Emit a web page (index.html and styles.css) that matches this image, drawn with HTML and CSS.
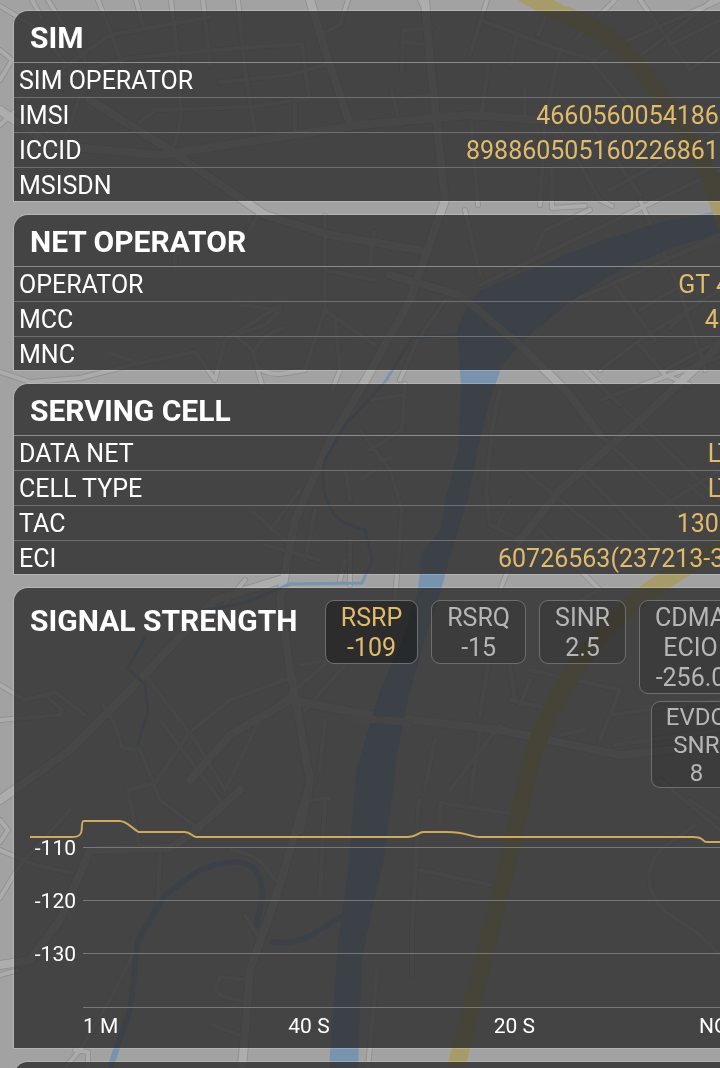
FILE: index.html
```
<!DOCTYPE html>
<html lang="en">

<head>
    <meta charset="UTF-8">
    <title>Cell Info</title>
    <link rel="stylesheet" href="styles.css">
</head>

<body>
    <svg class="map" viewBox="0 0 720 1068" preserveAspectRatio="xMinYMin slice" aria-hidden="true">
        <defs>
            <g id="streets">
                <path d="M0 6L40 30L70 70M32 0L42 18M48 0L85 60M98 0L112 35L122 65M136 0L143 26M171 0L178 60L181 115L178 135L172 150M203 0L210 65M238 0L245 70L255 133"/>
                <path d="M0 125L60 70L110 35L210 17M60 75L130 58L240 48L302 44L309 98M0 50L12 60L0 80M220 82L290 75L325 65M140 122L155 110L250 107L310 98M295 100V132M80 95L65 140M348 0L340 25L318 35"/>
                <path d="M420 0L430 22M487 0L470 55M402 70L403 30L432 28M402 42L430 45M480 20L560 50L545 120L540 205M517 35L510 65M548 12L538 35M560 50L595 60L610 48L720 0M592 62L640 120M615 0L575 40M400 125L392 90M405 98L430 95M488 65L482 112M525 88V115M471 122L478 205M552 168V208L585 206M610 190L720 130M555 120L600 200L612 206M585 115L640 195M640 0L690 70L720 48M720 20L670 45M635 60L720 -5"/>
                <path d="M245 237L260 212M175 270V255L185 250M240 305L280 310L265 325L235 335L252 350L262 385M108 353L140 363L195 352L208 370L215 380L225 340L280 305M325 216V310M325 270L375 280M0 372L30 382L80 378L140 363M335 320L340 370L332 390M283 328C245 340 245 375 280 374L305 370L325 310L375 345"/>
                <path d="M374 232L370 267M465 210L480 275M535 250L545 230L590 210M640 200L680 290L705 370M480 285L720 170M575 300L700 245M640 310L690 280M670 328L700 300M615 285L655 340M400 380L415 345L445 300M600 370L640 340L720 290M665 370L720 340M640 345L665 375L690 385M740 350L600 400M620 405L585 370"/>
                <path d="M405 384L402 430L370 450M370 400L402 395M360 430L390 470L402 510L395 600M360 480L375 470M380 460L392 458M500 390L492 430L486 490L490 525L520 540L500 590M521 468L560 500L630 555M600 435L690 520M580 470L640 530L660 550M625 410L720 500M665 505L720 470M510 500L498 525M690 485L705 500M345 465L350 500M540 530L600 590L580 600M650 590L690 545"/>
                <path d="M253 512L290 545M300 490L270 530M265 545L320 560M315 510L305 560M345 560L340 580M245 580L220 610M350 540V585"/>
                <path d="M0 685L25 700L55 692L85 715M45 695L62 710L60 715L0 720M103 705L115 725L122 748L140 750L160 800L200 830M160 720L220 800M145 675L195 740L225 790M128 790L155 783L190 732L230 700L290 678M128 790L140 850M225 790L260 720L330 660M140 0M310 780V800L330 798M325 720L320 770M160 852L158 900"/>
                <path d="M300 665L390 650M305 710L345 665M480 730L470 800M500 725L450 790M435 740L425 790M510 665L515 700M510 700L555 710M530 680L520 705M495 620L480 715M530 670L620 690L600 740M610 715L720 700M615 745L720 730M585 730L560 735M660 780L720 830M420 800L418 810L416 860L412 930L412 975M420 870L490 885M440 805V825M440 803L508 813M690 800L720 820M695 825L660 850C640 875 650 900 670 915L700 935L720 955"/>
                <path d="M0 820L8 830L0 842M0 898L20 865L70 810M0 850L35 865L72 873M160 900L110 1000L80 1050L65 1068M230 850C265 855 265 870 275 880M245 915L260 940M325 800L320 895M250 980L220 977L215 990L222 996L245 1002M212 1025L240 1035M377 970L368 1068M75 1050L88 1052V1068M0 975L18 970"/>
            </g>
            <g id="avenues">
                <path d="M0 110L50 145L160 155L360 125L470 115L540 120M90 100L170 150L265 215L330 235L420 250M310 0L325 50L350 125M425 0L430 60L445 200L410 300L360 390L330 440L295 520L280 600L290 670L310 780L300 830"/>
                <path d="M0 965L30 960L60 920L90 850L170 848L190 835L240 790M190 780L230 735L290 700L370 715L500 730L620 755L720 745M305 800L275 900L250 970L242 1068M390 275L460 295L520 345L570 395L600 435M720 345L640 420L560 490L520 540M280 580L215 600L130 690L70 750L0 800"/>
            </g>
        </defs>
        <use class="street-edge" href="#streets"/>
        <use class="avenue-edge" href="#avenues"/>
        <use class="street" href="#streets"/>
        <use class="avenue" href="#avenues"/>
        <path class="water" d="M720 211L660 222L600 241L540 265L480 290L465 310L457 330L461 385L458 450L445 500L440 530L422 552L418 590L402 640L380 690L356 770L348 870L338 940L329 1068H358L362 960L372 910L384 860L392 800L398 750L408 700L425 640L441 590L452 550L468 500L478 450L490 400L502 365L530 335L570 302L620 270L680 245L720 235Z"/>
        <path class="stream" d="M457 334L412 338L385 382L345 425L325 460C318 490 330 520 350 525L365 530L372 560L362 583L290 584L245 603L205 610M145 637L128 668L145 685L148 710L138 745"/>
        <path class="stream wide" d="M110 1068L130 1010L138 940L165 895L200 870C240 855 262 860 262 895L257 925M272 942C310 946 320 925 350 913"/>
        <path class="bridge" d="M460 295L520 345M352 718L410 722M700 245L720 236"/>
        <path class="highway" d="M525 -6L560 14C620 30 650 80 680 125S710 180 728 230M728 540L650 590C580 645 545 710 530 765L505 875L455 1072"/>
    </svg>

    <main class="screen">
        <section class="card">
            <h2>SIM</h2>
            <dl>
                <div class="row"><dt>SIM OPERATOR</dt><dd></dd></div>
                <div class="row"><dt>IMSI</dt><dd>466056005418600</dd></div>
                <div class="row"><dt>ICCID</dt><dd>89886050516022686100</dd></div>
                <div class="row"><dt>MSISDN</dt><dd></dd></div>
            </dl>
        </section>

        <section class="card">
            <h2>NET OPERATOR</h2>
            <dl>
                <div class="row"><dt>OPERATOR</dt><dd>GT 4G</dd></div>
                <div class="row"><dt>MCC</dt><dd>466</dd></div>
                <div class="row"><dt>MNC</dt><dd></dd></div>
            </dl>
        </section>

        <section class="card">
            <h2>SERVING CELL</h2>
            <dl>
                <div class="row"><dt>DATA NET</dt><dd>LTE</dd></div>
                <div class="row"><dt>CELL TYPE</dt><dd>LTE</dd></div>
                <div class="row"><dt>TAC</dt><dd>13000</dd></div>
                <div class="row"><dt>ECI</dt><dd>60726563(237213-35)</dd></div>
            </dl>
        </section>

        <section class="card signal">
            <div class="signal-head">
                <h2>SIGNAL STRENGTH</h2>
                <div class="metrics">
                    <button type="button" class="metric active">RSRP<br>-109</button>
                    <button type="button" class="metric">RSRQ<br>-15</button>
                    <button type="button" class="metric">SINR<br>2.5</button>
                    <div class="metric-stack">
                        <button type="button" class="metric">CDMA<br>ECIO<br>-256.0</button>
                        <button type="button" class="metric small">EVDO<br>SNR<br>8</button>
                    </div>
                </div>
            </div>
            <div class="chart">
                <div class="level"><span>-110</span></div>
                <div class="level"><span>-120</span></div>
                <div class="level"><span>-130</span></div>
                <div class="times">
                    <span>1 M</span>
                    <span>40 S</span>
                    <span>20 S</span>
                    <span>NOW</span>
                </div>
                <svg class="trace" viewBox="0 0 720 40" preserveAspectRatio="none" aria-hidden="true">
                    <path d="M0 25H42C50 25 52 22 52 17Q52 9 54 9H90C97 9 102 16 109 20H155C162 20 163 25 167 25H380C388 25 390 20 395 20H419C437 20 444 25 451 25H666C678 25 674 30 680 30H720"/>
                </svg>
            </div>
        </section>

        <section class="card">
            <h2>NEIGHBOR CELL</h2>
        </section>
    </main>
</body>
</html>
```

FILE: styles.css
```
body {
    margin: 0;
    height: 100vh;
    overflow: hidden;
    background-color: #a2a2a2;
    color: #fff;
    font-family: Roboto, "Liberation Sans", sans-serif;
    font-size: 25px;
}

h2, dl, dd {
    margin: 0;
}

/* map */
.map {
    position: fixed;
    top: 0;
    left: 0;
    width: 100%;
    height: 100%;
    z-index: -1;
    fill: none;
    stroke-linejoin: round;
    stroke-linecap: round;
}

.street-edge {
    stroke: #929292;
    stroke-width: 6px;
}

.street {
    stroke: #ababab;
    stroke-width: 4px;
}

.avenue-edge {
    stroke: #929292;
    stroke-width: 10px;
}

.avenue {
    stroke: #adadad;
    stroke-width: 8px;
}

.water {
    fill: #7793ad;
}

.stream {
    stroke: #7793ad;
    stroke-width: 3px;
}

.stream.wide {
    stroke-width: 6px;
}

.bridge {
    stroke: #a6a6a6;
    stroke-width: 7px;
}

.highway {
    stroke: #a89b6a;
    stroke-width: 18px;
}

/* the screen runs past the right edge of the window */
.screen {
    box-sizing: border-box;
    width: calc(100% + 46px);
    padding: 11px 14px;
    display: flex;
    flex-direction: column;
    gap: 14px;
}

.card {
    background-color: rgba(45, 45, 45, 0.8);
    border-radius: 14px 14px 0 0;
    box-shadow: 0 0 0 1px rgba(255, 255, 255, 0.2);
}

.card h2 {
    padding: 3px 16px 0;
    font-size: 30px;
    font-weight: 700;
    line-height: 48px;
    white-space: nowrap;
}

.row {
    display: flex;
    justify-content: space-between;
    padding: 2px 5px 0;
    line-height: 32px;
    border-top: 1px solid #707070;
}

.row:first-child {
    border-top-color: #8c8c8c;
}

.row:last-child {
    height: 31px;
}

dd {
    color: #e0bb6c;
}

/* signal strength */
.signal-head {
    display: flex;
    justify-content: space-between;
    padding: 12px 10px 0 0;
}

.signal-head h2 {
    padding-top: 0;
    line-height: 42px;
}

.metrics {
    display: flex;
    align-items: flex-start;
    gap: 13px;
}

.metric-stack {
    display: flex;
    flex-direction: column;
    align-items: flex-end;
    gap: 7px;
}

.metric {
    padding: 2px 15px 0;
    background-color: rgba(0, 0, 0, 0.12);
    border: 1px solid #6e6e6e;
    border-radius: 9px;
    color: #b6b6b6;
    font-family: inherit;
    font-size: 25px;
    line-height: 30px;
    text-align: center;
    white-space: nowrap;
    cursor: pointer;
}

.metric.small {
    padding: 1px 14px 0;
    font-size: 24px;
    line-height: 28px;
}

.metric.active {
    background-color: rgba(0, 0, 0, 0.35);
    color: #e0bb6c;
}

.chart {
    position: relative;
    margin: 24px 5px 0 16px;
    padding: 9px 0 4px;
    font-size: 21px;
}

.level {
    display: flex;
    align-items: center;
    height: 53px;
}

.level span {
    width: 46px;
    margin-right: 7px;
    text-align: right;
}

.level::after {
    content: "";
    flex: 1;
    height: 1px;
    background-color: #787878;
}

.times {
    display: grid;
    grid-template-columns: 1fr 1fr 1fr auto;
    margin: 27px 0 0 53px;
    border-top: 1px solid #787878;
    line-height: 36px;
}

.trace {
    position: absolute;
    top: 0;
    left: 0;
    width: 100%;
    height: 40px;
    fill: none;
    stroke: #cfa95c;
    stroke-width: 2px;
}
```
